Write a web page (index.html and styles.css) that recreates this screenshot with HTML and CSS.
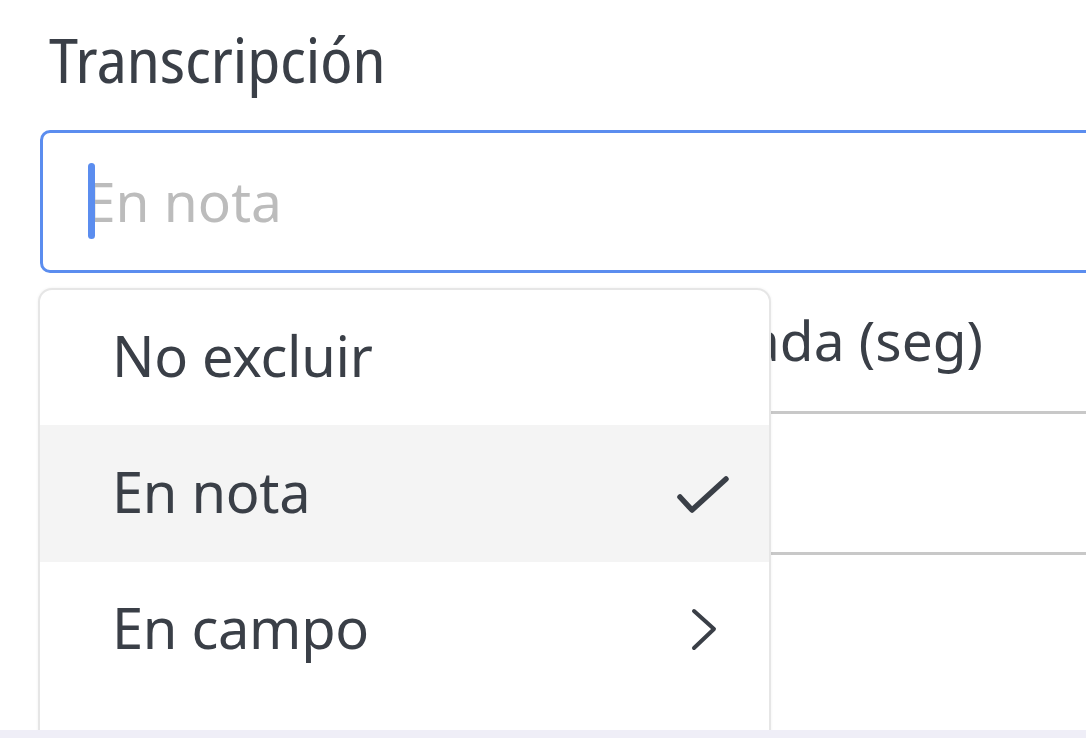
FILE: index.html
```html
<!DOCTYPE html>
<html lang="es">
<head>
<meta charset="utf-8">
<link rel="stylesheet" href="styles.css">
</head>
<body>
<div class="page">
  <div class="label">Transcripción</div>
  <div class="input">
    <span class="placeholder">En nota</span>
    <span class="caret"></span>
  </div>
  <div class="field">
    <div class="field-label">Duración de llamada (seg)</div>
    <div class="line line-first"></div>
    <div class="line"></div>
  </div>
  <div class="menu">
    <div class="item"><span>No excluir</span></div>
    <div class="item active"><span>En nota</span>
      <svg class="icon" viewBox="0 0 60 56" width="60" height="56"><path d="M9 31 L21 44 L55 13" fill="none" stroke="#3a3f47" stroke-width="5.5" stroke-linecap="round" stroke-linejoin="round"/></svg>
    </div>
    <div class="item"><span>En campo</span>
      <svg class="icon" viewBox="0 0 60 56" width="60" height="56"><path d="M23 9 L43 27 L23 46" fill="none" stroke="#3a3f47" stroke-width="4" stroke-linecap="round" stroke-linejoin="round"/></svg>
    </div>
    <div class="item"></div>
  </div>
</div>
<div class="bottom-bar"></div>
</body>
</html>
```
FILE: styles.css
```css
html, body {
  margin: 0;
  padding: 0;
  background: #ffffff;
}
body {
  font-family: "Noto Sans", sans-serif;
  color: #3a3f47;
}
.page {
  position: relative;
  height: 730px;
  overflow: hidden;
  padding-left: 40px;
}
.label {
  font-family: "Noto Sans Display", "Noto Sans", sans-serif;
  font-stretch: 87.5%;
  font-size: 62px;
  line-height: 62px;
  padding-top: 28px;
  padding-left: 9px;
  white-space: nowrap;
}
.input {
  position: relative;
  margin-top: 40px;
  margin-right: -30px;
  height: 143px;
  box-sizing: border-box;
  border: 3px solid #5b8def;
  border-radius: 10px;
  display: flex;
  align-items: center;
  padding-left: 42px;
  padding-bottom: 3px;
}
.placeholder {
  font-size: 55px;
  color: #bcbcbc;
  white-space: nowrap;
}
.caret {
  position: absolute;
  left: 45px;
  top: 30px;
  width: 7px;
  height: 76px;
  border-radius: 4px;
  background: #5b8def;
}
.field {
  padding-top: 29px;
  margin-right: -30px;
}
.field-label {
  width: 943px;
  font-size: 55px;
  line-height: 76px;
  white-space: nowrap;
  display: flex;
  justify-content: flex-end;
}
.line {
  height: 138px;
  border-bottom: 3px solid #c8c8c8;
}
.line-first {
  height: 33px;
}
.menu {
  position: absolute;
  left: 38px;
  top: 288px;
  width: 733px;
  height: 600px;
  box-sizing: border-box;
  background: #ffffff;
  border: 2px solid #e6e6e6;
  border-radius: 14px;
  overflow: hidden;
  box-shadow: 0 0 3px rgba(0, 0, 0, 0.06);
}
.item {
  height: 136px;
  display: flex;
  align-items: center;
  justify-content: space-between;
  padding-left: 72px;
  padding-right: 38px;
  padding-bottom: 6px;
  box-sizing: border-box;
  font-size: 56px;
  letter-spacing: -0.3px;
  white-space: nowrap;
}
.item:first-child {
  height: 135px;
}
.item.active {
  background: #f4f4f4;
  height: 137px;
}
.icon {
  display: block;
  overflow: visible;
  margin-bottom: -6px;
}
.bottom-bar {
  height: 8px;
  background: #efeef7;
}
```
